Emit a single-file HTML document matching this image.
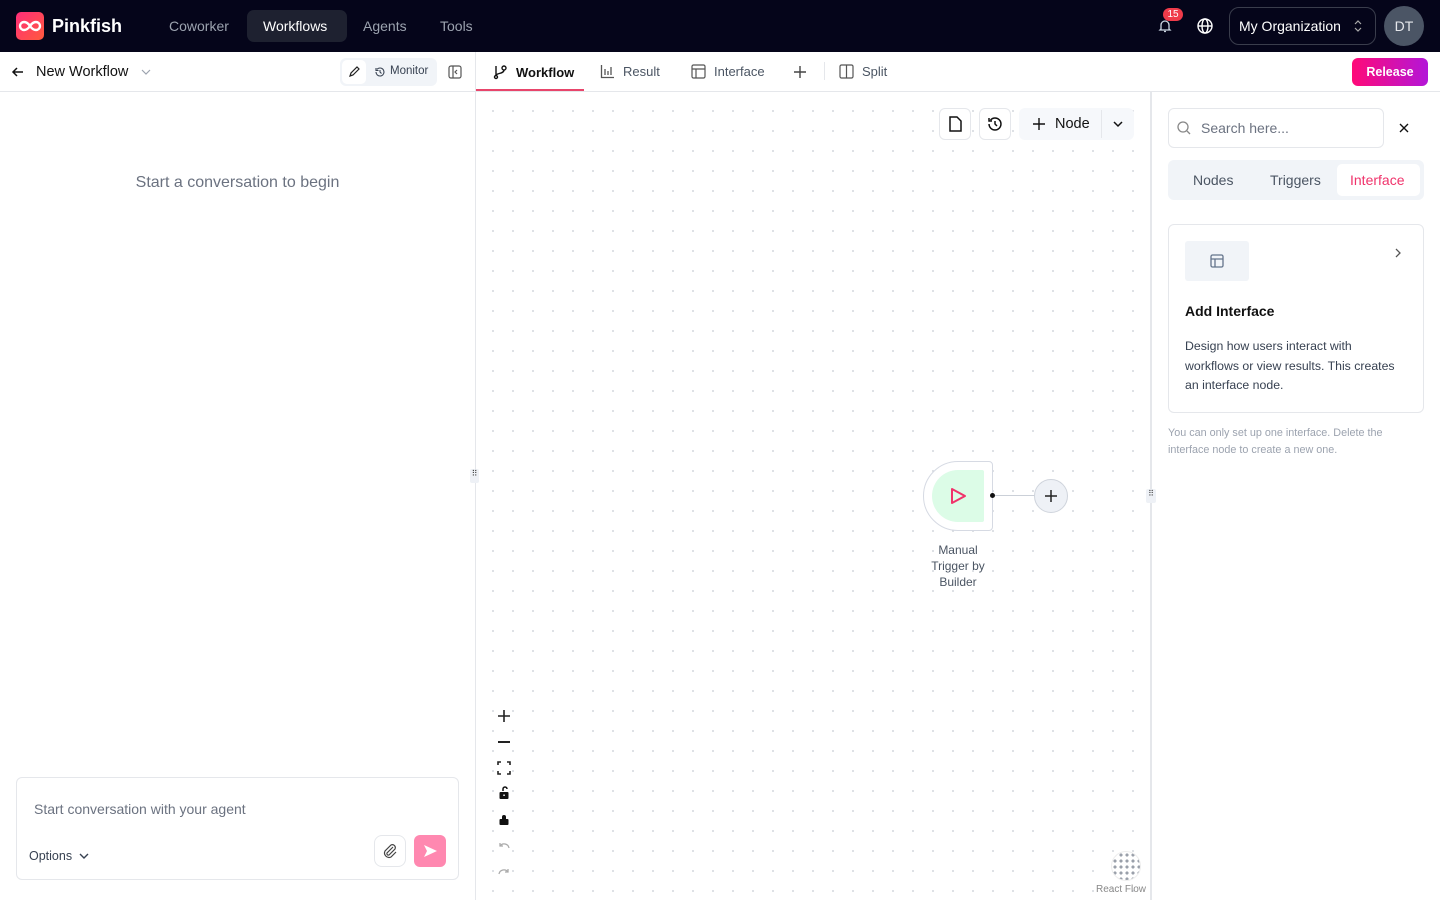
<!DOCTYPE html>
<html><head><meta charset="utf-8"><style>
*{box-sizing:border-box;margin:0;padding:0}
body{width:1440px;height:900px;overflow:hidden;font-family:"Liberation Sans",sans-serif;background:#fff;position:relative;color:#111}
.abs{position:absolute}
.top{left:0;top:0;width:1440px;height:52px;background:#05051a}
.nav{color:#9ca3af;font-size:14px;top:18px}
svg{display:block}
.tab{top:64px;font-size:12.5px;color:#4b5563;display:flex;align-items:center;gap:8px}
.canvas{left:476px;top:92px;width:675px;height:808px;background-image:radial-gradient(circle,#cdd1d8 0.7px,transparent 1.1px);background-size:20px 20px;background-position:7px 9px}
</style></head><body>
<div class="abs top"></div>
<div class="abs" style="left:16px;top:12px;width:28px;height:28px;border-radius:5px;background:linear-gradient(135deg,#ff2d7a,#ff5a3c)"><svg width="28" height="28" viewBox="0 0 28 28"><path d="M14 14c-2-3-4-4-6-4a4 4 0 000 8c2 0 4-1 6-4zm0 0c2 3 4 4 6 4a4 4 0 000-8c-2 0-4 1-6 4z" fill="none" stroke="#fff" stroke-width="2.4"/></svg></div>
<div class="abs" style="left:52px;top:16px;color:#fff;font-size:18px;font-weight:bold">Pinkfish</div>
<div class="abs nav" style="left:169px">Coworker</div>
<div class="abs" style="left:247px;top:10px;width:100px;height:32px;background:#1e2130;border-radius:7px"></div>
<div class="abs nav" style="left:263px;color:#fff">Workflows</div>
<div class="abs nav" style="left:363px">Agents</div>
<div class="abs nav" style="left:440px">Tools</div>
<svg class="abs" style="left:1157px;top:18px" width="16" height="16" viewBox="0 0 16 16"><path d="M4 11V7a4 4 0 018 0v4l1 1H3zM7 13.5h2" fill="none" stroke="#cbd5e1" stroke-width="1.3"/></svg>
<div class="abs" style="left:1163px;top:8px;width:20px;height:13px;background:#ef3b4a;border-radius:7px;color:#fff;font-size:10px;text-align:center;line-height:13px">15</div>
<svg class="abs" style="left:1196px;top:17px" width="18" height="18" viewBox="0 0 18 18" fill="none" stroke="#fff" stroke-width="1.4"><circle cx="9" cy="9" r="7"/><ellipse cx="9" cy="9" rx="3" ry="7"/><path d="M2 9h14"/></svg>
<div class="abs" style="left:1229px;top:7px;width:147px;height:38px;border:1px solid #3a3d4c;border-radius:10px;color:#fff;font-size:14px;padding:10px 0 0 9px">My Organization</div>
<svg class="abs" style="left:1353px;top:19px" width="10" height="14" viewBox="0 0 10 14" fill="none" stroke="#aaa" stroke-width="1.2"><path d="M2 5l3-3 3 3M2 9l3 3 3-3"/></svg>
<div class="abs" style="left:1384px;top:6px;width:40px;height:40px;border-radius:50%;background:#4b5565;color:#e5e7eb;font-size:14px;text-align:center;line-height:40px">DT</div>

<div class="abs" style="left:0;top:91px;width:1440px;height:1px;background:#e5e7eb"></div>
<div class="abs" style="left:475px;top:52px;width:1px;height:848px;background:#e5e7eb"></div>
<svg class="abs" style="left:10px;top:64px" width="16" height="16" viewBox="0 0 16 16" fill="none" stroke="#111" stroke-width="1.5"><path d="M13 8H3M7 4L3 8l4 4"/></svg>
<div class="abs" style="left:36px;top:64px;font-size:14.5px">New Workflow</div>
<svg class="abs" style="left:140px;top:67px" width="12" height="10" viewBox="0 0 12 10" fill="none" stroke="#9ca3af" stroke-width="1.2"><path d="M2 3l4 4 4-4"/></svg>
<div class="abs" style="left:340px;top:58px;width:97px;height:28px;background:#f1f4f8;border-radius:6px"></div>
<div class="abs" style="left:342px;top:60px;width:24px;height:24px;background:#fff;border-radius:5px"></div>
<svg class="abs" style="left:348px;top:66px" width="12" height="12" viewBox="0 0 12 12" fill="none" stroke="#222" stroke-width="1.2"><path d="M2 10l1-3 6-6 2 2-6 6z"/></svg>
<svg class="abs" style="left:374px;top:66px" width="12" height="12" viewBox="0 0 12 12" fill="none" stroke="#374151" stroke-width="1.1"><path d="M2 6a4 4 0 104-4c-1.3 0-2.3.6-3 1.4M2 2v2.5h2.5M6 4v2l1.5 1.5"/></svg>
<div class="abs" style="left:390px;top:65px;font-size:11.5px;color:#374151">Monitor</div>
<svg class="abs" style="left:448px;top:65px" width="14" height="14" viewBox="0 0 14 14" fill="none" stroke="#555" stroke-width="1.2"><rect x="1" y="1" width="12" height="12" rx="2"/><path d="M5 1v12M9 5L7 7l2 2"/></svg>
<div class="abs" style="left:0;width:475px;top:174px;text-align:center;color:#6b7280;font-size:16px">Start a conversation to begin</div>
<div class="abs" style="left:16px;top:777px;width:443px;height:103px;border:1px solid #e5e7eb;border-radius:6px"></div>
<div class="abs" style="left:34px;top:801px;font-size:14px;color:#6b7280">Start conversation with your agent</div>
<div class="abs" style="left:29px;top:849px;font-size:12.5px;color:#374151">Options</div>
<svg class="abs" style="left:78px;top:851px" width="12" height="10" viewBox="0 0 12 10" fill="none" stroke="#374151" stroke-width="1.4"><path d="M2 3l4 4 4-4"/></svg>
<div class="abs" style="left:374px;top:835px;width:32px;height:32px;border:1px solid #e5e7eb;border-radius:8px"><svg width="30" height="30" viewBox="0 0 30 30" fill="none" stroke="#444" stroke-width="1.2"><path d="M18 11l-6 6a1.5 1.5 0 002 2l6-6a3 3 0 00-4-4l-6 6a4.5 4.5 0 006 6l5-5"/></svg></div>
<div class="abs" style="left:414px;top:835px;width:32px;height:32px;background:#ff88b0;border-radius:6px"><svg width="32" height="32" viewBox="0 0 32 32"><path d="M10 10l13 6-13 6 3-6z" fill="#fff"/></svg></div>

<div class="abs tab" style="left:492px;color:#111;font-weight:bold;font-size:13px"><svg width="16" height="16" viewBox="0 0 16 16" fill="none" stroke="#111" stroke-width="1.4"><circle cx="4" cy="13" r="1.5"/><circle cx="12" cy="4" r="2"/><path d="M4 2v9.5M12 6c0 4-8 3-8 5.5"/></svg>Workflow</div>
<div class="abs" style="left:476px;top:89px;width:108px;height:2px;background:#e8456b"></div>
<div class="abs tab" style="left:600px;font-size:13px"><svg width="15" height="15" viewBox="0 0 15 15" fill="none" stroke="#555" stroke-width="1.3"><path d="M1.5 1v12.5H14M5 11V5M8 11V7M11 11V3"/></svg>Result</div>
<div class="abs tab" style="left:691px;font-size:13px"><svg width="15" height="15" viewBox="0 0 15 15" fill="none" stroke="#555" stroke-width="1.2"><rect x="1" y="1" width="13" height="13" rx="1.5"/><path d="M1 5h13M5 5v9"/></svg>Interface</div>
<svg class="abs" style="left:793px;top:65px" width="14" height="14" viewBox="0 0 14 14" stroke="#444" stroke-width="1.4"><path d="M7 1v12M1 7h12"/></svg>
<div class="abs" style="left:824px;top:62px;width:1px;height:18px;background:#e5e7eb"></div>
<div class="abs tab" style="left:839px;font-size:13px"><svg width="15" height="15" viewBox="0 0 15 15" fill="none" stroke="#555" stroke-width="1.2"><rect x="1" y="1" width="13" height="13" rx="1.5"/><path d="M7.5 1v13"/></svg>Split</div>
<div class="abs" style="left:1352px;top:58px;width:76px;height:28px;border-radius:6px;background:linear-gradient(90deg,#ff0a78,#b316d8);color:#fff;font-size:12.5px;font-weight:bold;text-align:center;line-height:28px">Release</div>

<div class="abs canvas"></div>
<div class="abs" style="left:1150px;top:92px;width:2px;height:808px;background:#e5e7eb"></div>
<div class="abs" style="left:939px;top:108px;width:32px;height:32px;border:1px solid #e5e7eb;border-radius:6px;background:#fff"><svg width="30" height="30" viewBox="0 0 30 30" fill="none" stroke="#111" stroke-width="1.5"><path d="M10 8h7l4 4v10H10z"/></svg></div>
<div class="abs" style="left:979px;top:108px;width:32px;height:32px;border:1px solid #e5e7eb;border-radius:6px;background:#fff"><svg width="30" height="30" viewBox="0 0 30 30" fill="none" stroke="#111" stroke-width="1.5"><path d="M9 15a6 6 0 106-6c-2 0-3.5 1-4.5 2M9 9v3h3M15 12v3l2 2"/></svg></div>
<div class="abs" style="left:1019px;top:108px;width:115px;height:32px;background:#f6f8fb;border-radius:6px"></div>
<svg class="abs" style="left:1032px;top:117px" width="14" height="14" viewBox="0 0 14 14" stroke="#111" stroke-width="1.4"><path d="M7 1v12M1 7h12"/></svg>
<div class="abs" style="left:1055px;top:116px;font-size:14.5px;color:#111">Node</div>
<div class="abs" style="left:1101px;top:110px;width:1px;height:28px;background:#e5e7eb"></div>
<svg class="abs" style="left:1111px;top:117px" width="14" height="14" viewBox="0 0 14 14" fill="none" stroke="#111" stroke-width="1.5"><path d="M3 5l4 4 4-4"/></svg>

<div class="abs" style="left:923px;top:461px;width:70px;height:70px;border:1px solid #d6dae3;border-radius:35px 4px 4px 35px;background:#fff"></div>
<div class="abs" style="left:932px;top:470px;width:52px;height:52px;background:#dcfce7;border-radius:26px 2px 2px 26px"><svg width="52" height="52" viewBox="0 0 52 52"><path d="M20 19l13 7-13 7z" fill="none" stroke="#f0336b" stroke-width="2" stroke-linejoin="round"/></svg></div>
<div class="abs" style="left:990px;top:493px;width:5px;height:5px;border-radius:50%;background:#111"></div>
<div class="abs" style="left:995px;top:495px;width:40px;height:1px;background:#cbd0d8"></div>
<div class="abs" style="left:1034px;top:479px;width:34px;height:34px;border-radius:50%;border:1px solid #cfd4dc;background:#eef1f6"><svg width="32" height="32" viewBox="0 0 32 32" stroke="#222" stroke-width="1.5"><path d="M16 10v12M10 16h12"/></svg></div>
<div class="abs" style="left:918px;top:542px;width:80px;text-align:center;font-size:12px;line-height:16px;color:#4b5563">Manual Trigger by Builder</div>
<div class="abs" style="left:470px;top:469px;width:9px;height:14px;background:#eef1f6;border-radius:2px;font-size:8px;color:#444;text-align:center">⠿</div>
<div class="abs" style="left:1146px;top:489px;width:10px;height:14px;background:#eef1f6;border-radius:2px;font-size:8px;color:#444;text-align:center">⠿</div>

<svg class="abs" style="left:497px;top:709px" width="14" height="14" viewBox="0 0 14 14" stroke="#222" stroke-width="1.6"><path d="M7 1v12M1 7h12"/></svg>
<div class="abs" style="left:498px;top:741px;width:12px;height:2px;background:#222"></div>
<svg class="abs" style="left:497px;top:761px" width="14" height="14" viewBox="0 0 14 14" fill="none" stroke="#222" stroke-width="1.6"><path d="M1 4V1h3M10 1h3v3M13 10v3h-3M4 13H1v-3"/></svg>
<svg class="abs" style="left:497px;top:786px" width="14" height="14" viewBox="0 0 14 14"><path d="M6 5V3a2 2 0 014 0" fill="none" stroke="#111" stroke-width="1.5"/><rect x="2.5" y="6" width="9" height="7" rx="1" fill="#111"/><rect x="6.3" y="8.5" width="1.5" height="1.5" fill="#fff"/></svg>
<svg class="abs" style="left:497px;top:812px" width="14" height="14" viewBox="0 0 14 14"><path d="M5 7V5a2 2 0 014 0v2" fill="#111"/><rect x="2.5" y="7" width="9" height="6" rx="1" fill="#111"/></svg>
<svg class="abs" style="left:497px;top:840px" width="14" height="12" viewBox="0 0 14 12" fill="none" stroke="#aaa" stroke-width="1.3"><path d="M3 3v3h3M3 6a5 5 0 019 2"/></svg>
<svg class="abs" style="left:497px;top:866px" width="14" height="12" viewBox="0 0 14 12" fill="none" stroke="#aaa" stroke-width="1.3"><path d="M11 3v3H8M11 6a5 5 0 00-9 2"/></svg>
<div class="abs" style="left:1111px;top:851px;width:30px;height:30px;border-radius:50%;background:#fff;border:1px solid #eee;background-image:radial-gradient(circle,#9aa0aa 1.4px,transparent 1.8px);background-size:6px 6px;background-position:0 0"></div>
<div class="abs" style="left:1096px;top:884px;font-size:10px;color:#888">React Flow</div>

<div class="abs" style="left:1168px;top:108px;width:216px;height:40px;border:1px solid #e5e7eb;border-radius:6px"></div>
<svg class="abs" style="left:1176px;top:120px" width="16" height="16" viewBox="0 0 16 16" fill="none" stroke="#888" stroke-width="1.3"><circle cx="7" cy="7" r="5"/><path d="M11 11l3 3"/></svg>
<div class="abs" style="left:1201px;top:120px;font-size:14px;color:#6b7280">Search here...</div>
<svg class="abs" style="left:1398px;top:122px" width="12" height="12" viewBox="0 0 12 12" stroke="#111" stroke-width="1.4"><path d="M2 2l8 8M10 2l-8 8"/></svg>
<div class="abs" style="left:1168px;top:160px;width:256px;height:40px;background:#f1f4f8;border-radius:6px"></div>
<div class="abs" style="left:1337px;top:164px;width:83px;height:32px;background:#fff;border-radius:5px"></div>
<div class="abs" style="left:1193px;top:172px;font-size:14px;color:#4b5563">Nodes</div>
<div class="abs" style="left:1270px;top:172px;font-size:14px;color:#4b5563">Triggers</div>
<div class="abs" style="left:1350px;top:172px;font-size:14px;color:#f0336b">Interface</div>
<div class="abs" style="left:1168px;top:224px;width:256px;height:189px;border:1px solid #e5e7eb;border-radius:6px"></div>
<div class="abs" style="left:1185px;top:241px;width:64px;height:40px;background:#f1f4f8;border-radius:3px"><svg width="64" height="40" viewBox="0 0 64 40" fill="none" stroke="#64748b" stroke-width="1.3"><rect x="26" y="14" width="12" height="12" rx="1.5"/><path d="M26 18h12M30 18v8"/></svg></div>
<svg class="abs" style="left:1392px;top:247px" width="12" height="12" viewBox="0 0 12 12" fill="none" stroke="#555" stroke-width="1.3"><path d="M4 2l4 4-4 4"/></svg>
<div class="abs" style="left:1185px;top:303px;font-size:14px;font-weight:bold">Add Interface</div>
<div class="abs" style="left:1185px;top:337px;width:218px;font-size:12.3px;line-height:19.5px;color:#374151">Design how users interact with workflows or view results. This creates an interface node.</div>
<div class="abs" style="left:1168px;top:425px;width:235px;font-size:10.8px;line-height:17px;color:#9ca3af">You can only set up one interface. Delete the interface node to create a new one.</div>
</body></html>
